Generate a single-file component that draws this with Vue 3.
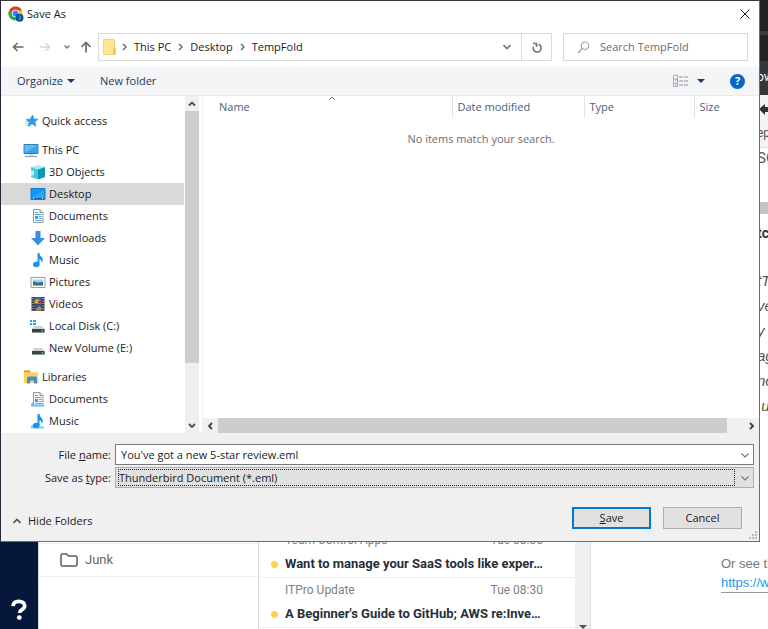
<script setup>
import { ref } from 'vue'

const crumbs = ['This PC', 'Desktop', 'TempFold']
const groups = [
  { name: 'Quick access', icon: 'star', children: [] },
  {
    name: 'This PC',
    icon: 'pc',
    children: [
      { name: '3D Objects', icon: 'cube' },
      { name: 'Desktop', icon: 'desktop' },
      { name: 'Documents', icon: 'doc' },
      { name: 'Downloads', icon: 'down' },
      { name: 'Music', icon: 'note' },
      { name: 'Pictures', icon: 'picture' },
      { name: 'Videos', icon: 'film' },
      { name: 'Local Disk (C:)', icon: 'sysdisk' },
      { name: 'New Volume (E:)', icon: 'disk' },
    ],
  },
  {
    name: 'Libraries',
    icon: 'library',
    children: [
      { name: 'Documents', icon: 'libdoc' },
      { name: 'Music', icon: 'libnote' },
    ],
  },
]
const selected = ref('Desktop')
const fileName = ref("You've got a new 5-star review.eml")
const fileType = ref('Thunderbird Document (*.eml)')
const search = ref('')

const mails = [
  { from: 'Team Control Apps', time: 'Tue 08:30', subject: 'Want to manage your SaaS tools like exper…' },
  { from: 'ITPro Update', time: 'Tue 08:30', subject: "A Beginner's Guide to GitHub; AWS re:Inve…" },
]
const bodyLines = ['tT', 've', 'y', 'ag', 'no', '.u']
</script>

<template>
  <div class="desktop">
    <div class="mail">
      <header class="topbars">
        <div class="bar bar-title"></div>
        <div class="bar bar-line"></div>
        <div class="bar bar-tabs"></div>
        <div class="bar bar-tools"><span class="peek">ov</span></div>
      </header>
      <div class="mail-body">
        <nav class="rail">
          <button class="rail-help" aria-label="Help">
            <svg width="18" height="22" viewBox="0 0 18 22">
              <path d="M3 7.2C3.3 4 5.6 2.4 8.8 2.4c3.400 0 5.900 1.700 5.900 4.500 0 3.900-5.200 3.600-5.200 7.200" fill="none" stroke="#fff" stroke-width="3.700" />
              <circle cx="9.300" cy="18.600" r="2.400" fill="#fff" />
            </svg>
          </button>
        </nav>
        <aside class="folders">
          <a href="#" class="folder">
            <svg width="18" height="14" viewBox="0 0 18 14">
              <path d="M1 2.500Q1 1 2.500 1H6.500L8.500 3H15.500Q17 3 17 4.500V11.500Q17 13 15.500 13H2.500Q1 13 1 11.500Z" fill="none" stroke="#555b61" stroke-width="1.500" />
            </svg>
            <span>Junk</span>
          </a>
        </aside>
        <section class="list">
          <div class="rows">
            <article v-for="m in mails" :key="m.from" class="row">
              <div class="row-top"><span>{{ m.from }}</span><span>{{ m.time }}</span></div>
              <div class="row-sub"><i class="dot"></i><strong>{{ m.subject }}</strong></div>
            </article>
          </div>
          <div class="list-scroll">
            <svg width="8" height="4" viewBox="0 0 8 4"><path d="M0 0H8L4 4Z" fill="#505050" /></svg>
          </div>
        </section>
        <section class="reader">
          <div class="reader-tools">
            <svg class="peek" width="11" height="16" viewBox="0 0 11 16"><path d="M2 8L8 3V6H11V11H8V14Z" fill="#333" /></svg>
            <span class="peek">ep</span>
          </div>
          <div class="peek subject">SC</div>
          <div class="peek sender"></div>
          <div class="peek heading">tc</div>
          <div class="peek lines"><em v-for="l in bodyLines" :key="l">{{ l }}</em></div>
          <div class="more">
            <span>Or see the</span>
            <a href="#">https://www</a>
          </div>
        </section>
      </div>
    </div>

    <form class="dialog" @submit.prevent>
      <div class="title">
        <svg width="16" height="16" viewBox="0 0 16 16">
          <circle cx="7.500" cy="7.500" r="7" fill="#fbc116" />
          <path d="M1.400 4A7 7 0 0 1 13.800 4.500H7.500L4.500 9Z" fill="#e33b2e" />
          <path d="M1.400 4A7 7 0 0 0 6.800 14.500L9.500 10L4.600 9Z" fill="#2da94f" />
          <circle cx="7.500" cy="7.500" r="3.700" fill="#fff" />
          <circle cx="7.500" cy="7.500" r="2.900" fill="#3c7ef0" />
          <circle cx="11.500" cy="11.700" r="4" fill="#075293" />
          <path d="M12 9.500V13.200H10.500" fill="none" stroke="#5bb7ef" />
        </svg>
        <span>Save As</span>
        <button type="button" class="plain close" aria-label="Close">
          <svg width="10" height="10" viewBox="0 0 10 10"><path d="M.5 .5L9.500 9.500M9.500 .5L.5 9.500" stroke="#222" /></svg>
        </button>
      </div>

      <div class="navrow">
        <div class="arrows">
          <button type="button" class="plain" aria-label="Back">
            <svg width="12" height="12" viewBox="0 0 12 12"><path d="M11.500 6H1.500M5.500 2L1.500 6L5.500 10" fill="none" stroke="#6b6b6b" stroke-width="1.600" /></svg>
          </button>
          <button type="button" class="plain" aria-label="Forward">
            <svg width="12" height="12" viewBox="0 0 12 12"><path d="M.5 6H10.500M6.500 2L10.500 6L6.500 10" fill="none" stroke="#d6d6d6" stroke-width="1.500" /></svg>
          </button>
          <button type="button" class="plain recent" aria-label="Recent locations">
            <svg width="6" height="4" viewBox="0 0 6 4"><path d="M.5 .5L3 3L5.500 .5" fill="none" stroke="#777" stroke-width="1.400" /></svg>
          </button>
          <button type="button" class="plain" aria-label="Up">
            <svg width="12" height="12" viewBox="0 0 12 12"><path d="M6 11.500V1.500M1.500 6L6 1.500L10.500 6" fill="none" stroke="#6b6b6b" stroke-width="1.700" /></svg>
          </button>
        </div>
        <div class="address">
          <svg class="addr-folder" width="13" height="16" viewBox="0 0 13 16">
            <path d="M.5 .5H11.500V8.500L12.500 9.500V15.500H.5Z" fill="#ffe694" stroke="#f2d67a" />
            <path d="M10 15V10L11.500 8.500L12.500 9.500V15.500Z" fill="#efc75a" />
          </svg>
          <template v-for="c in crumbs" :key="c">
            <svg class="sep" width="5" height="8" viewBox="0 0 5 8"><path d="M1 1L4 4L1 7" fill="none" stroke="#666" stroke-width="1.400" /></svg>
            <a href="#" class="crumb">{{ c }}</a>
          </template>
          <button type="button" class="plain addr-drop" aria-label="Previous locations">
            <svg width="8" height="6" viewBox="0 0 8 6"><path d="M.5 1L4 4.500L7.500 1" fill="none" stroke="#777" stroke-width="1.600" /></svg>
          </button>
          <button type="button" class="plain refresh" aria-label="Refresh">
            <svg width="10" height="11" viewBox="0 0 10 11">
              <path d="M1 1.500H4.500V5M6.500 2.300A4 4 0 1 1 1.500 4.500" fill="none" stroke="#707070" stroke-width="1.500" />
            </svg>
          </button>
        </div>
        <label class="search">
          <svg width="13" height="13" viewBox="0 0 13 13"><circle cx="8" cy="4.700" r="3.700" fill="none" stroke="#aaa3a8" stroke-width="1.200" /><path d="M5.200 7.500L1 12" stroke="#aaa3a8" stroke-width="1.400" /></svg>
          <input v-model="search" type="text" placeholder="Search TempFold" aria-label="Search TempFold" />
        </label>
      </div>

      <div class="toolbar">
        <button type="button" class="plain organize">Organize
          <svg width="8" height="4" viewBox="0 0 8 4"><path d="M0 0H8L4 4Z" fill="#1f3864" /></svg>
        </button>
        <button type="button" class="plain">New folder</button>
        <button type="button" class="plain view" aria-label="Change view">
          <svg width="16" height="12" viewBox="0 0 16 12">
            <path d="M.5 .5H4.500V11.500H.5ZM.5 4H4.500M.5 8H4.500" fill="#fff" stroke="#a5a9b3" />
            <path d="M2 5H3.500" stroke="#6aa0dd" stroke-width="1.500" /><path d="M2 9.500H3.500" stroke="#d38a7c" stroke-width="1.500" />
            <path d="M6 2H10M11 2H15M6 6H10M11 6H15M6 10H10M11 10H15" stroke="#8b8f96" stroke-width="1.200" />
          </svg>
          <svg width="8" height="4" viewBox="0 0 8 4"><path d="M0 0H8L4 4Z" fill="#1f3864" /></svg>
        </button>
        <button type="button" class="plain help" aria-label="Get help">?</button>
      </div>

      <div class="main">
        <div class="tree">
          <div v-for="g in groups" :key="g.name" class="group">
            <template v-for="(n, i) in [g, ...g.children]" :key="n.name">
              <button type="button" class="plain node" :class="{ child: i > 0, on: n.name === selected }" @click="selected = n.name">
                <svg width="16" height="16" viewBox="0 0 16 16">
                  <template v-if="n.icon === 'star'">
                    <path d="M9.500 2L10.900 6.100L15 6.200L11.800 8.800L12.800 13.200L9 10.800L5.200 13.500L6.300 9L3 6.500L7.300 6.200Z" fill="#2f9be8" stroke="#2f9be8" stroke-width=".8" />
                    <path d="M2.500 8.500H5M2 10.500H5M3 12.500H4.500" stroke="#9ccff3" />
                  </template>
                  <template v-else-if="n.icon === 'pc'">
                    <path d="M1 2.500H15V11.500H1Z" fill="#5ebbff" stroke="#3a7ea9" />
                    <path d="M1.500 11L14.500 3V11Z" fill="#38a2f0" />
                    <path d="M6 12H10V13.500H6Z" fill="#c7d6df" /><path d="M2 14.500H14" stroke="#8aa1ad" stroke-width="1.200" />
                  </template>
                  <template v-else-if="n.icon === 'cube'">
                    <path d="M1 3L8 1L15 3L8 5.500Z" fill="#a8edf4" /><path d="M1 3L8 5.500V15.500L1 13Z" fill="#44cadb" />
                    <path d="M15 3L8 5.500V15.500L15 13Z" fill="#0a98b5" /><path d="M1 6L4 7V11L1 12Z" fill="#b9f1f5" />
                  </template>
                  <template v-else-if="n.icon === 'desktop'">
                    <path d="M1 2.500H15V13.500H1Z" fill="#0f98fa" stroke="#1a7cc2" />
                    <path d="M2 12.500H14" stroke="#0863ae" /><path d="M3 12.500H4M12 12.500H13" stroke="#fff" />
                    <path d="M2 12L14 4V12Z" fill="#29a7ff" />
                  </template>
                  <template v-else-if="n.icon === 'doc' || n.icon === 'libdoc'">
                    <path d="M3.500 1.500H10L13 4.500V14.500H3.500Z" fill="#f8fbfd" stroke="#8d99a3" />
                    <path d="M10 1.500V4.500H13" fill="#d5dde2" stroke="#8d99a3" />
                    <path d="M5 4.500H8M5 6.500H11.500" stroke="#45a6e8" /><path d="M5 8H8V11H5Z" fill="#3c9ee4" />
                    <path d="M9 8.500H12M9 10.500H12M5 12.500H12" stroke="#6fa9cf" />
                    <path v-if="n.icon === 'libdoc'" d="M1 13L3 11V13.500H13.500L15 15.500H1Z" fill="#60c3f4" />
                  </template>
                  <path v-else-if="n.icon === 'down'" d="M5.500 1H10.500V8H15L8 15.500L1 8H5.500Z" fill="#3790df" />
                  <template v-else-if="n.icon === 'note' || n.icon === 'libnote'">
                    <path v-if="n.icon === 'libnote'" d="M1 13L4 11V13.500H13L15 15.500H1Z" fill="#75cff8" />
                    <path d="M7.500 1H9.500Q9.500 3.500 11.500 5Q13.800 7 12 11Q12 8 9.500 7V12.500H7.500Z" fill="#1596ea" />
                    <ellipse cx="6.300" cy="12.500" rx="3.300" ry="2.700" fill="#1596ea" />
                  </template>
                  <template v-else-if="n.icon === 'picture'">
                    <path d="M1 3.500H15V13.500H1Z" fill="#fff" stroke="#999fa5" /><path d="M3 5.500H13V11.500H3Z" fill="#a3d3f5" />
                    <path d="M3 7L7 8.500L13 9.500V11.500H3Z" fill="#347a70" /><path d="M7 8.500L13 8V10Z" fill="#29609c" />
                  </template>
                  <template v-else-if="n.icon === 'film'">
                    <path d="M1.500 1H14.500V15H1.500Z" fill="#3c3c3c" /><path d="M4.500 1.500H11.500V7.500H4.500Z" fill="#3f6dc8" /><path d="M4.500 8.500H11.500V14.500H4.500Z" fill="#315cae" />
                    <path d="M4.500 5L8 3L11.500 7.500H4.500Z" fill="#e9ac28" /><path d="M5 14.500L9 10L11.500 12V14.500Z" fill="#c98730" /><path d="M8 5H11V7H8Z" fill="#a83d2c" />
                    <path d="M3 2V15M13 2V15" stroke="#ddd" stroke-dasharray="1 1.500" />
                  </template>
                  <template v-else-if="n.icon === 'sysdisk' || n.icon === 'disk'">
                    <path d="M4 8H12L14.500 11V14.500H2V11Z" fill="#d1d4d6" /><path d="M2 11H14.500V14.500H2Z" fill="#3d4143" />
                    <path d="M11.500 12.800H13" stroke="#4be052" stroke-width="1.400" />
                    <path v-if="n.icon === 'sysdisk'" d="M0 2H2V4H0ZM3 2H6V4H3ZM0 5H2V7H0ZM3 5H6V7H3Z" fill="#16b1e9" />
                  </template>
                  <template v-else>
                    <path d="M1 1.500H7L8 3.500H1Z" fill="#d99505" /><path d="M1 3.500H15V14H1Z" fill="#ffd15b" />
                    <path d="M4 9Q4 7.500 5.500 7.500H12.500Q14 7.500 14 9V14.500H11V11.500H7V14.500H4Z" fill="#3e92d4" />
                  </template>
                </svg>
                <span>{{ n.name }}</span>
              </button>
            </template>
          </div>
        </div>
        <div class="vscroll">
          <svg width="14" height="15" viewBox="0 0 14 15"><path d="M4 9.500L7 6.500L10 9.500" fill="none" stroke="#505050" stroke-width="1.800" /></svg>
          <div class="vthumb"></div>
          <svg width="14" height="15" viewBox="0 0 14 15"><path d="M4 6L7 9L10 6" fill="none" stroke="#505050" stroke-width="1.800" /></svg>
        </div>
        <div class="files">
          <table>
            <thead>
              <tr>
                <th class="c-name">Name
                  <svg class="sort" width="8" height="5" viewBox="0 0 8 5"><path d="M1 4L4 1L7 4" fill="none" stroke="#666" /></svg>
                </th>
                <th class="c-date">Date modified</th><th class="c-type">Type</th><th class="c-size">Size</th>
              </tr>
            </thead>
            <tbody><tr><td colspan="4">No items match your search.</td></tr></tbody>
          </table>
          <div class="hscroll">
            <svg width="15" height="14" viewBox="0 0 15 14"><path d="M9 4L6 7L9 10" fill="none" stroke="#404040" stroke-width="1.800" /></svg>
            <div class="hthumb"></div>
            <svg width="15" height="14" viewBox="0 0 15 14"><path d="M6 4L9 7L6 10" fill="none" stroke="#404040" stroke-width="1.800" /></svg>
          </div>
        </div>
      </div>

      <div class="footer">
        <div class="fields">
          <label for="fname">File <u>n</u>ame:</label>
          <div class="combo">
            <input id="fname" v-model="fileName" type="text" />
            <svg width="16" height="18" viewBox="0 0 16 18"><path d="M4.500 7.500L8 11L11.500 7.500" fill="none" stroke="#777" stroke-width="1.200" /></svg>
          </div>
          <label for="ftype">Save as <u>t</u>ype:</label>
          <div class="combo type">
            <select id="ftype" v-model="fileType"><option>Thunderbird Document (*.eml)</option></select>
            <svg width="16" height="18" viewBox="0 0 16 18"><path d="M4.500 7.500L8 11L11.500 7.500" fill="none" stroke="#777" stroke-width="1.200" /></svg>
          </div>
        </div>
        <div class="actions">
          <button type="button" class="plain hide">
            <svg width="8" height="6" viewBox="0 0 8 6"><path d="M.5 5L4 1.500L7.500 5" fill="none" stroke="#555" stroke-width="1.700" /></svg>
            Hide Folders
          </button>
          <button type="submit" class="btn primary"><u>S</u>ave</button>
          <button type="button" class="btn">Cancel</button>
        </div>
        <svg class="grip" width="8" height="8" viewBox="0 0 8 8"><path d="M6 0H8V2H6ZM3 3H5V5H3ZM6 3H8V5H6ZM0 6H2V8H0ZM3 6H5V8H3ZM6 6H8V8H6Z" fill="#bdbdbd" /></svg>
      </div>
    </form>
  </div>
</template>

<style>
body { margin: 0; background: #fff; }
</style>

<style scoped>
* { box-sizing: border-box; }
svg { display: block; flex: none; }
.desktop { position: relative; min-height: 100vh; overflow: hidden; display: flex; font-family: "Open Sans", "Noto Sans", sans-serif; font-size: 11px; }
.plain { border: 0; padding: 0; background: none; font: inherit; color: inherit; display: flex; align-items: center; }

.mail { flex: 1; min-width: 0; display: flex; flex-direction: column; font-family: Roboto, sans-serif; }
.bar { background: #222327; }
.bar-title { height: 31px; }
.bar-line { height: 4px; background: #3b3c40; }
.bar-tabs { height: 26px; }
.bar-tools { height: 34px; background: #36373a; color: #fff; font-size: 12px; line-height: 32px; }
.peek { display: block; width: 11px; margin-left: auto; overflow: hidden; white-space: nowrap; }
.mail-body { flex: 1; display: flex; min-height: 0; }
.rail { width: 38px; background: #05173a; display: flex; flex-direction: column; justify-content: flex-end; padding: 0 10px 8px; }
.rail-help { border: 0; background: none; padding: 0; }
.folders { width: 221px; border-left: 1px solid #d5dade; border-right: 1px solid #d5dade; padding-bottom: 52px; display: flex; flex-direction: column; justify-content: flex-end; }
.folder { display: flex; align-items: center; gap: 7px; height: 34px; padding: 0 0 1px 21px; border-top: 1px solid #eceff1; border-bottom: 1px solid #eceff1; font-size: 13px; color: #666; text-decoration: none; }
.list { width: 332px; display: flex; border-right: 1px solid #dbe2e6; }
.rows { flex: 1; min-width: 0; display: flex; flex-direction: column; justify-content: flex-end; padding-bottom: 1px; }
.row { height: 50px; border-bottom: 1px solid #eee; padding: 3px 32px 0 12px; }
.row-top { display: flex; justify-content: space-between; padding-left: 14px; font-size: 12px; line-height: 19px; color: #808080; }
.row-sub { display: flex; align-items: center; gap: 7px; font-size: 13px; line-height: 28px; color: #26303a; white-space: nowrap; }
.row-sub strong { font-weight: 700; }
.dot { width: 7px; height: 7px; flex: none; border-radius: 50%; background: #ffd24d; }
.list-scroll { width: 15px; background: #f0f0f0; display: flex; align-items: flex-end; justify-content: center; }
.reader { flex: 1; min-width: 0; display: flex; flex-direction: column; color: #555; }
.reader-tools { height: 53px; background: #f4f4f4; border-bottom: 1px solid #ddd; padding-top: 6px; font-size: 12px; line-height: 32px; }
.subject { font-size: 15px; line-height: 20px; }
.sender { height: 12px; margin-top: 34px; background: #c9c4c4; }
.heading { margin-top: 8px; font-size: 14px; line-height: 22px; font-weight: 700; color: #333; }
.lines { margin-top: 24px; font-family: "Liberation Sans", sans-serif; font-size: 15px; line-height: 25px; }
.lines em { display: block; }
.more { margin-top: auto; margin-left: 130px; padding-bottom: 36px; font-family: "Liberation Sans", sans-serif; font-size: 13px; line-height: 19px; white-space: nowrap; }
.more span { display: block; color: #777; }
.more a { display: block; color: #2199e8; text-decoration: none; border-bottom: 1px solid #999; }

.dialog { position: absolute; top: 0; left: 0; right: 8px; background: #fff; border: 1px solid #6c6c70; border-top-color: #38383c; border-left-color: #28283a; color: #1a1a1a; line-height: 16px; }
.title { display: flex; align-items: center; gap: 3px; height: 26px; padding: 0 9px 0 7px; }
.close { margin-left: auto; }
.navrow { display: flex; gap: 11px; padding: 6px 11px 6px; }
.arrows { display: flex; align-items: center; gap: 15px; margin-right: -5px; }
.recent { margin: 0 -5px 0 -2px; }
.address { flex: 1; display: flex; align-items: center; border: 1px solid #d9d9d9; height: 28px; padding-left: 4px; }
.sep { margin: 0 7px; }
.addr-folder + .sep { margin-left: 6px; }
.crumb { color: inherit; text-decoration: none; }
.addr-drop { margin-left: auto; padding: 0 10px; height: 100%; }
.refresh { width: 30px; height: 100%; justify-content: center; border-left: 1px solid #d9d9d9; }
.search { width: 185px; display: flex; align-items: center; gap: 10px; border: 1px solid #d9d9d9; padding-left: 13px; }
.search input { flex: 1; min-width: 0; border: 0; padding: 0; outline: 0; font: inherit; }
.search input::placeholder { color: #6d6d6d; opacity: 1; }
.toolbar { display: flex; align-items: center; gap: 25px; height: 28px; padding: 0 14px 0 16px; background: #f4f5f7; color: #1e395b; }
.organize { gap: 4px; }
.view { margin-left: auto; gap: 8px; }
.help { width: 15px; height: 15px; border-radius: 50%; background: #0866c6; color: #fff; justify-content: center; font-weight: 700; }

.main { display: flex; border-top: 1px solid #e9eaec; }
.tree { width: 183px; padding: 14px 0 1px; }
.group + .group { margin-top: 7px; }
.node { width: 100%; height: 22px; gap: 3px; padding-left: 22px; }
.node.child { padding-left: 29px; }
.node.on { background: #d9d9d9; }
.vscroll { width: 14px; margin-left: 1px; background: #f0f0f0; display: flex; flex-direction: column; }
.vthumb { height: 252px; margin-bottom: auto; background: #cdcdcd; }
.files { flex: 1; min-width: 0; margin-left: 3px; border-left: 1px solid #f2f2f2; display: flex; flex-direction: column; }
table { width: 100%; table-layout: fixed; border-collapse: collapse; }
th { height: 22px; padding: 0 0 0 5px; text-align: left; font-weight: 400; color: #4c607a; border-right: 1px solid #e3e3e3; }
th.c-name { position: relative; padding-left: 16px; }
th.c-date { width: 132px; }
th.c-type { width: 110px; }
th.c-size { width: 65px; border-right: 0; }
.sort { position: absolute; top: 0; left: calc(50% + 1px); }
td { padding: 13px 0; text-align: center; color: #6d6d6d; }
.hscroll { margin-top: auto; height: 15px; background: #f0f0f0; display: flex; align-items: center; }
.hthumb { flex: 1; height: 100%; margin-right: 17px; background: #cdcdcd; }

.footer { position: relative; background: #f0f0f0; padding: 11px 5px 12px; }
.fields { display: grid; grid-template-columns: 105px 1fr; column-gap: 4px; row-gap: 2px; align-items: center; }
.fields label { text-align: right; }
.combo { display: flex; align-items: center; height: 21px; background: #fff; border: 1px solid #7a7a7a; }
.combo input { flex: 1; min-width: 0; border: 0; padding: 0 5px; outline: 0; font: inherit; color: inherit; }
.combo.type { background: #e1e1e1; border-color: #adadad; }
.combo select { flex: 1; min-width: 0; height: 17px; margin: 0 2px; padding: 0; appearance: none; border: 1px dotted #222; border-radius: 0; background: none; font: inherit; line-height: 15px; color: inherit; outline: 0; }
.actions { display: flex; gap: 12px; margin-top: 19px; padding-right: 12px; }
.hide { gap: 7px; margin: 5px auto 0 7px; }
.btn { width: 79px; height: 22px; padding: 0; border: 1px solid #adadad; background: #e1e1e1; font: inherit; color: inherit; }
.btn.primary { border: 2px solid #0078d7; }
.grip { position: absolute; right: 2px; bottom: 2px; }
</style>
